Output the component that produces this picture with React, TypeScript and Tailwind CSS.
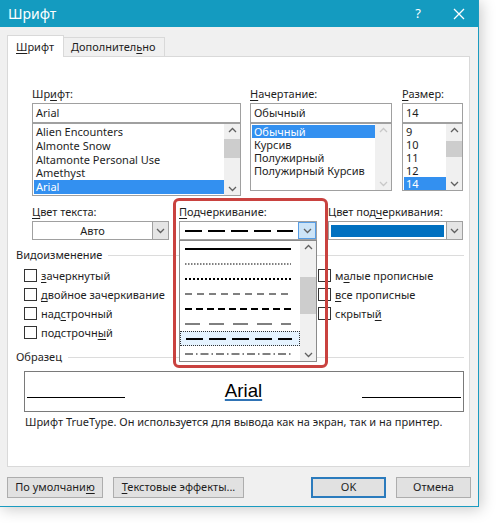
import React from 'react'

const fontItems = ['Alien Encounters', 'Almonte Snow', 'Altamonte Personal Use', 'Amethyst', 'Arial']
const styleItems = ['Обычный', 'Курсив', 'Полужирный', 'Полужирный Курсив']
const sizeItems = ['9', '10', '11', '12', '14']

function U({ children }: { children: React.ReactNode }) {
  return <span className="underline underline-offset-2 decoration-1">{children}</span>
}

function Chevron({ up, color = '#606060' }: { up?: boolean; color?: string }) {
  return (
    <svg width="9" height="6" viewBox="0 0 9 6">
      <path d={up ? 'M1 5L4.5 1.5L8 5' : 'M1 1L4.5 4.5L8 1'} fill="none" stroke={color} strokeWidth="1.3" />
    </svg>
  )
}

function ScrollBar({ thumbTop, thumbH, disabled }: { thumbTop: number; thumbH: number; disabled?: boolean }) {
  const c = disabled ? '#c8c8c8' : '#606060'
  return (
    <div className="relative w-[16px] h-full bg-[#f0f0f0] flex flex-col items-center justify-between py-[3px]">
      <Chevron up color={c} />
      {!disabled && (
        <div className="absolute left-0 right-0 bg-[#cdcdcd]" style={{ top: thumbTop, height: thumbH }} />
      )}
      <Chevron color={c} />
    </div>
  )
}

function ListBox({
  items,
  selected,
  height,
  row,
  thumb,
  disabled,
}: {
  items: string[]
  selected: number
  height: number
  row: number
  thumb: [number, number]
  disabled?: boolean
}) {
  return (
    <div className="flex border border-[#a0a0a0] bg-white" style={{ height }}>
      <div className="flex-1 pt-[1px] pl-[1px] overflow-hidden">
        {items.map((it, i) => (
          <div
            key={it}
            className={
              i === selected
                ? 'bg-[#3390f0] text-white pl-[2px] whitespace-nowrap'
                : 'pl-[2px] whitespace-nowrap'
            }
            style={{ height: row, lineHeight: row + 'px' }}
          >
            {it}
          </div>
        ))}
      </div>
      <ScrollBar thumbTop={thumb[0]} thumbH={thumb[1]} disabled={disabled} />
    </div>
  )
}

function Line({ dash, w = 2 }: { dash?: string; w?: number }) {
  return (
    <svg width="106" height="4" viewBox="0 0 106 4">
      <line x1="0" y1="2" x2="106" y2="2" stroke="#000" strokeWidth={w} strokeDasharray={dash} />
    </svg>
  )
}

function Check({ label }: { label: React.ReactNode }) {
  return (
    <div className="flex items-center h-[19px]">
      <div className="w-[13px] h-[13px] border border-[#333] bg-white mr-[4px]" />
      <span className="leading-[15px]">{label}</span>
    </div>
  )
}

function Section({ title }: { title: string }) {
  return (
    <div className="flex items-center h-[16px] pl-[8px] pr-[5px]">
      <span className="leading-[16px]">{title}</span>
      <div className="flex-1 h-px bg-[#dcdcdc] ml-[6px]" />
    </div>
  )
}

function Btn({ children, w, primary }: { children: React.ReactNode; w: number; primary?: boolean }) {
  return (
    <div
      className={
        primary
          ? 'h-[21px] flex items-center justify-center bg-[#e1e1e1] border-2 border-[#2b7bbd]'
          : 'h-[21px] flex items-center justify-center bg-[#e1e1e1] border border-[#adadad]'
      }
      style={{ width: w }}
    >
      {children}
    </div>
  )
}

export default function App() {
  const underlineItems: { dash?: string; w: number }[] = [
    { w: 2 },
    { dash: '1.5 1.5', w: 1 },
    { dash: '2 2', w: 2 },
    { dash: '7 5', w: 1 },
    { dash: '7 4', w: 2 },
    { dash: '15 9', w: 1 },
    { dash: '17 6', w: 2 },
    { dash: '8 3 1.5 3', w: 1 },
  ]

  return (
    <div className="w-[499px] h-[523px] bg-white overflow-hidden font-['Noto_Sans',sans-serif] text-[11px] text-[#1e1e1e]">
      <div className="w-[479px] h-[507px] bg-[#f0f0f0] border-r border-b border-[#1a9bc0] shadow-[2px_2px_14px_rgba(0,0,0,0.22)] flex flex-col">
        {/* title bar */}
        <div className="h-[27px] bg-[#149bc0] flex items-center text-white">
          <span className="pl-[8px] text-[14px] leading-[20px] flex-1">Шрифт</span>
          <span className="text-[13px] mr-[32px]">?</span>
          <svg width="12" height="12" viewBox="0 0 12 12" className="mr-[13px]">
            <path d="M1 1L11 11M11 1L1 11" stroke="#fff" strokeWidth="1.3" />
          </svg>
        </div>

        {/* tabs */}
        <div className="flex items-end h-[29px] pl-[7px]">
          <div className="h-[22px] w-[57px] bg-white border border-b-0 border-[#d9d9d9] relative z-10 -mb-px flex items-center pl-[8px] leading-[16px]">
            <span><U>Ш</U>рифт</span>
          </div>
          <div className="h-[19px] w-[101px] border border-l-0 border-b-0 border-[#d9d9d9] flex items-center pl-[7px]">
            <span>Дополнител<U>ь</U>но</span>
          </div>
        </div>

        {/* panel */}
        <div className="mx-[7px] w-[463px] h-[411px] bg-white border border-[#d9d9d9] flex flex-col">
          {/* row 1 */}
          <div className="flex pl-[24px] pt-[29px] gap-[9px]">
            <div className="w-[209px]">
              <div className="h-[17px] leading-[16px]">Шр<U>и</U>фт:</div>
              <div className="h-[20px] border border-[#a0a0a0] pl-[3px] leading-[18px]">Arial</div>
              <ListBox items={fontItems} selected={4} height={73} row={13.75} thumb={[15, 19]} />
            </div>
            <div className="w-[142px]">
              <div className="h-[17px] leading-[16px]"><U>Н</U>ачертание:</div>
              <div className="h-[20px] border border-[#a0a0a0] pl-[3px] leading-[18px]">Обычный</div>
              <ListBox items={styleItems} selected={0} height={68} row={13} thumb={[0, 0]} disabled />
            </div>
            <div className="w-[61px] ml-[1px]">
              <div className="h-[17px] leading-[16px]"><U>Р</U>азмер:</div>
              <div className="h-[20px] border border-[#a0a0a0] pl-[3px] leading-[18px]">14</div>
              <ListBox items={sizeItems} selected={4} height={68} row={13} thumb={[17, 16]} />
            </div>
          </div>

          {/* row 2 */}
          <div className="flex pl-[24px] pt-[8px]">
            <div className="w-[137px]">
              <div className="h-[17px] leading-[16px]"><U>Ц</U>вет текста:</div>
              <div className="h-[19px] flex border border-[#a0a0a0]">
                <div className="flex-1 text-center leading-[17px]">Авто</div>
                <div className="w-[16px] bg-[#e5e5e5] border-l border-[#a0a0a0] flex items-center justify-center">
                  <Chevron />
                </div>
              </div>
            </div>
            <div className="w-[138px] ml-[10px] relative">
              <div className="h-[17px] leading-[16px]"><U>П</U>одчеркивание:</div>
              <div className="h-[19px] flex border border-[#a0a0a0] bg-white">
                <div className="flex-1 flex items-center pl-[5px]">
                  <svg width="108" height="4" viewBox="0 0 108 4">
                    <line x1="0" y1="2" x2="108" y2="2" stroke="#000" strokeWidth="2" strokeDasharray="17 6" />
                  </svg>
                </div>
                <div className="w-[18px] bg-[#cce4f7] border border-[#569de5] flex items-center justify-center">
                  <Chevron />
                </div>
              </div>
              {/* dropdown */}
              <div className="absolute left-0 top-[36px] w-[138px] h-[122px] bg-white border border-[#8a8a8a] flex z-10">
                <div className="flex-1">
                  {underlineItems.map((it, i) => (
                    <div
                      key={i}
                      className={
                        i === 6
                          ? 'h-[15px] flex items-center pl-[5px] bg-[#e5f3ff] border border-dotted border-[#333]'
                          : 'h-[15px] flex items-center pl-[5px]'
                      }
                    >
                      <Line dash={it.dash} w={it.w} />
                    </div>
                  ))}
                </div>
                <ScrollBar thumbTop={36} thumbH={37} />
              </div>
              {/* highlight */}
              <div className="absolute -left-[6px] -top-[6px] w-[155px] h-[170px] border-[3px] border-[#c9423f] rounded-[6px] pointer-events-none z-20" />
            </div>
            <div className="w-[135px] ml-[11px]">
              <div className="h-[17px] leading-[16px]">Цвет под<U>ч</U>еркивания:</div>
              <div className="h-[19px] flex border border-[#a0a0a0]">
                <div className="flex-1 flex items-center px-[2px]">
                  <div className="w-full h-[12px] bg-[#0070c0]" />
                </div>
                <div className="w-[16px] bg-[#e5e5e5] border-l border-[#a0a0a0] flex items-center justify-center">
                  <Chevron />
                </div>
              </div>
            </div>
          </div>

          {/* effects */}
          <div className="mt-[7px]">
            <Section title="Видоизменение" />
          </div>
          <div className="flex pl-[16px] pt-[3px]">
            <div className="w-[294px]">
              <Check label={<><U>з</U>ачеркнутый</>} />
              <Check label={<><U>д</U>войное зачеркивание</>} />
              <Check label={<>над<U>с</U>трочный</>} />
              <Check label={<>подстрочн<U>ы</U>й</>} />
            </div>
            <div>
              <Check label={<>м<U>а</U>лые прописные</>} />
              <Check label={<><U>в</U>се прописные</>} />
              <Check label={<>скрыты<U>й</U></>} />
            </div>
          </div>

          {/* preview */}
          <div className="mt-[7px]">
            <Section title="Образец" />
          </div>
          <div className="ml-[16px] mt-[6px] w-[440px] h-[41px] border border-[#7a7a7a] flex items-start pt-[8px] px-[2px]">
            <div className="w-[98px] h-[18px] border-b border-black" />
            <div className="flex-1 text-center leading-[22px] text-[18.67px] font-['Liberation_Sans',Arial,sans-serif] text-black">
              <span className="underline decoration-[#2f73b5] decoration-2 underline-offset-[2px]">Arial</span>
            </div>
            <div className="w-[99px] h-[18px] border-b border-black" />
          </div>
          <div className="ml-[17px] mt-[2px] leading-[16px] whitespace-nowrap">
            Шрифт TrueType. Он используется для вывода как на экран, так и на принтер.
          </div>
        </div>

        {/* buttons */}
        <div className="flex px-[7px] mt-[10px]">
          <Btn w={96}>
            <span>По умолчани<U>ю</U></span>
          </Btn>
          <div className="ml-[10px]">
            <Btn w={131}>
              <span><U>Т</U>екстовые эффекты...</span>
            </Btn>
          </div>
          <div className="flex-1" />
          <Btn w={75} primary>
            OK
          </Btn>
          <div className="ml-[10px]">
            <Btn w={75}>Отмена</Btn>
          </div>
        </div>
      </div>
    </div>
  )
}
